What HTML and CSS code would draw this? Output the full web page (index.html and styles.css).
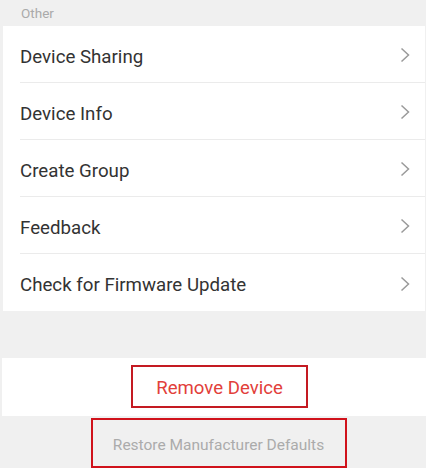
FILE: index.html
```html
<!DOCTYPE html>
<html>
<head>
<meta charset="utf-8">
<link rel="stylesheet" href="styles.css">
</head>
<body>
<div class="section-title">Other</div>
<div class="card">
  <div class="row"><span class="label">Device Sharing</span><svg class="chev" viewBox="0 0 10 16"><path d="M1.5 1.5 L8.5 8 L1.5 14.5"/></svg></div>
  <div class="row"><span class="label">Device Info</span><svg class="chev" viewBox="0 0 10 16"><path d="M1.5 1.5 L8.5 8 L1.5 14.5"/></svg></div>
  <div class="row"><span class="label">Create Group</span><svg class="chev" viewBox="0 0 10 16"><path d="M1.5 1.5 L8.5 8 L1.5 14.5"/></svg></div>
  <div class="row"><span class="label">Feedback</span><svg class="chev" viewBox="0 0 10 16"><path d="M1.5 1.5 L8.5 8 L1.5 14.5"/></svg></div>
  <div class="row"><span class="label">Check for Firmware Update</span><svg class="chev" viewBox="0 0 10 16"><path d="M1.5 1.5 L8.5 8 L1.5 14.5"/></svg></div>
</div>
<div class="remove-band">
  <div class="remove-box">Remove Device</div>
</div>
<div class="restore-wrap">
  <div class="restore-box">Restore Manufacturer Defaults</div>
</div>
</body>
</html>
```
FILE: styles.css
```css
html, body {
  margin: 0;
  padding: 0;
}
body {
  background: #f0f0f0;
  font-family: Roboto, "Noto Sans", sans-serif;
  width: 426px;
  height: 468px;
  overflow: hidden;
}
.section-title {
  height: 26px;
  padding-left: 21px;
  font-size: 13.5px;
  line-height: 27px;
  color: #aaaaaa;
  box-sizing: border-box;
}
.card {
  background: #ffffff;
  margin-left: 3px;
  margin-right: 1px;
  padding-left: 17px;
}
.row {
  height: 57px;
  display: flex;
  align-items: center;
  justify-content: space-between;
  border-bottom: 1px solid #ebebeb;
  box-sizing: border-box;
  padding-right: 16px;
}
.row:last-child {
  border-bottom: none;
}
.label {
  font-size: 18.7px;
  color: #333333;
  padding-top: 5px;
}
.chev {
  width: 10px;
  height: 16px;
  fill: none;
  stroke: #9a9a9a;
  stroke-width: 1.5;
  margin-top: 2px;
  margin-right: -1px;
}
.remove-band {
  margin-top: 47px;
  margin-left: 2px;
  height: 58px;
  background: #ffffff;
  display: flex;
  justify-content: center;
  align-items: flex-start;
  padding-top: 7px;
  box-sizing: border-box;
}
.remove-box {
  width: 177px;
  height: 43px;
  box-sizing: border-box;
  border: 2px solid #c41a22;
  color: #e2403a;
  font-size: 18.6px;
  display: flex;
  align-items: center;
  justify-content: center;
  margin-left: 11px;
  padding-top: 2px;
}
.restore-wrap {
  display: flex;
  justify-content: center;
  padding-top: 2px;
}
.restore-box {
  width: 256px;
  height: 50px;
  box-sizing: border-box;
  border: 2px solid #d0121b;
  color: #ababab;
  font-size: 15.5px;
  display: flex;
  align-items: center;
  justify-content: center;
  margin-left: 11px;
  padding-top: 4px;
}
```
